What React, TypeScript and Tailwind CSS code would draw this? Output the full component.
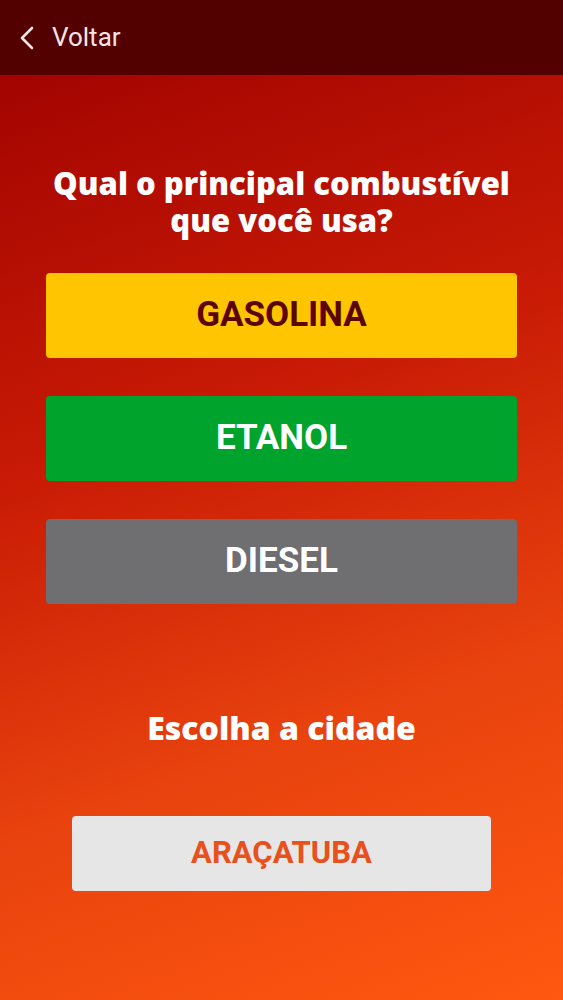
export default function App() {
  const fuels = [
    { label: "GASOLINA", className: "bg-[#ffc500] text-[#5c0505]" },
    { label: "ETANOL", className: "bg-[#00a32c] text-white" },
    { label: "DIESEL", className: "bg-[#6f6e70] text-white" },
  ];

  return (
    <div className="w-[563px] h-[1000px] flex flex-col bg-[linear-gradient(160deg,#9c0000_0%,#c81a05_40%,#e8420e_70%,#ff5810_100%)] font-['Roboto',sans-serif]">
      {/* Header */}
      <div className="h-[75px] shrink-0 bg-[#520000] flex items-center pl-[18px] gap-[14px] text-[#f6e4e4]">
        <svg width="20" height="26" viewBox="0 0 20 26" fill="none" stroke="currentColor" strokeWidth="2.6" strokeLinecap="round" strokeLinejoin="round">
          <path d="M14 3 L4 13 L14 23" />
        </svg>
        <span className="text-[26px] leading-none pb-[2px]">Voltar</span>
      </div>

      {/* Question */}
      <h1 className="mt-[90px] text-center text-white text-[31px] leading-[37px] font-extrabold font-['Open_Sans',sans-serif]">
        Qual o principal combustível
        <br />
        que você usa?
      </h1>

      <div className="mt-[34px] px-[46px] flex flex-col gap-[38px]">
        {fuels.map((f) => (
          <button
            key={f.label}
            className={`h-[85px] rounded-[4px] text-[35px] font-bold ${f.className}`}
          >
            {f.label}
          </button>
        ))}
      </div>

      <p className="mt-[105px] text-center text-white text-[32px] leading-[38px] font-extrabold font-['Open_Sans',sans-serif]">
        Escolha a cidade
      </p>

      <div className="mt-[69px] px-[72px]">
        <button className="w-full h-[75px] rounded-[4px] bg-[#e6e6e6] text-[#e8501c] text-[31px] font-bold">
          ARAÇATUBA
        </button>
      </div>
    </div>
  );
}
